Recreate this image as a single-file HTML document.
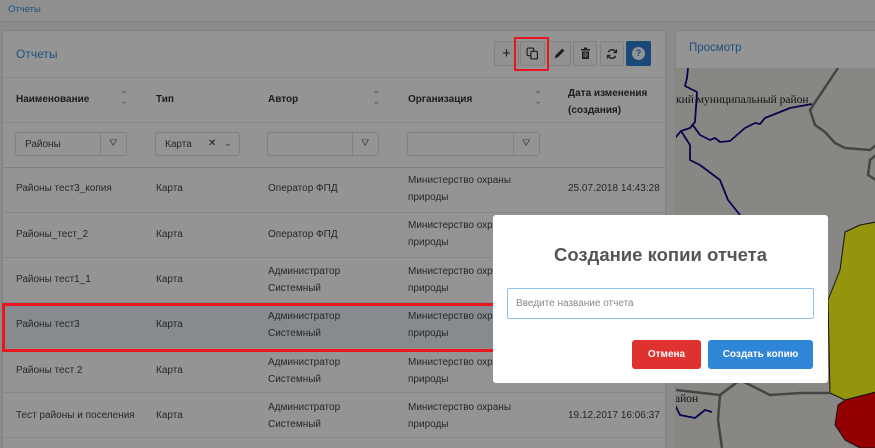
<!DOCTYPE html>
<html style="overflow:hidden;background:#909090"><head><meta charset="utf-8"><style>
*{box-sizing:border-box;margin:0;padding:0}
html,body{width:875px;height:448px;overflow:hidden}
body{position:relative;background:#f0f0f0;font-family:"Liberation Sans",sans-serif;font-size:10px;color:#444}
.a{position:absolute}
.bc{left:0;top:0;width:875px;height:22px;background:#f7f7f7;border-bottom:1px solid #ddd}
.panel{background:#fff;border:1px solid #e2e2e2}
.line{height:1px;background:#e6e6e6;position:absolute;left:0;right:0}
.th{font-weight:bold;color:#333;font-size:10px}
.btn{top:41px;height:25px;border:1px solid #ddd;background:#fafafa;border-radius:2px;display:flex;align-items:center;justify-content:center;color:#333}
.inp{border:1px solid #ddd;border-radius:3px;height:24px;background:#fff}
.td{font-size:10px;color:#444;line-height:17px}
.sort{color:#999;font-size:10px;line-height:6px}
</style></head><body>
<div class="a bc"></div>
<div class="a" style="left:8px;top:4px;color:#3a8ad6;font-size:9.5px">Отчеты</div>

<div class="a panel" style="left:2px;top:30px;width:664px;height:418px;border-bottom:none">
 <div class="a" style="left:13px;top:16px;color:#3a8ad6;font-size:12px">Отчеты</div>
 <div class="line" style="top:46px"></div>
 <div class="line" style="top:91px"></div>
 <div class="line" style="top:136px;background:#ddd"></div>
 <div class="line" style="top:181px"></div>
 <div class="line" style="top:226px"></div>
 <div class="line" style="top:271px"></div>
 <div class="line" style="top:316px"></div>
 <div class="line" style="top:361px"></div>
 <div class="line" style="top:406px"></div>
</div>
<div class="a" style="left:3px;top:302px;width:662px;height:45px;background:#e8f0f8"></div>

<div class="a btn" style="left:494px;width:25px;font-size:15px">+</div>
<div class="a btn" style="left:520px;width:25px"><svg width="13" height="13" viewBox="0 0 12 12" fill="none" stroke="#333" stroke-width="1.1"><rect x="1" y="1" width="6" height="7" rx="1"/><rect x="4.5" y="4" width="6" height="7" rx="1" fill="#fafafa"/></svg></div>
<div class="a btn" style="left:547px;width:24px"><svg width="13" height="13" viewBox="0 0 12 12"><path d="M1.5 10.5l1-3 6-6 2 2-6 6z" fill="#333"/></svg></div>
<div class="a btn" style="left:573px;width:24px"><svg width="11" height="13" viewBox="0 0 11 12"><rect x="1" y="1.5" width="9" height="1.5" fill="#333"/><rect x="4" y="0" width="3" height="2" fill="#333"/><path d="M2 4h7v7.5H2z" fill="#333"/><path d="M4 5v5M5.5 5v5M7 5v5" stroke="#fafafa" stroke-width=".7"/></svg></div>
<div class="a btn" style="left:600px;width:24px"><svg width="12" height="12" viewBox="0 0 12 12" fill="none" stroke="#333" stroke-width="1.4"><path d="M10 4.5A4.2 4.2 0 0 0 2.3 4.2M2 7.5a4.2 4.2 0 0 0 7.7.3"/><path d="M10.5 1.5v3h-3M1.5 10.5v-3h3" stroke-width="1.2"/></svg></div>
<div class="a btn" style="left:626px;width:25px;background:#2b7fd0;border-color:#2b7fd0"><div style="width:13px;height:13px;border-radius:50%;background:#fff;color:#2b7fd0;font-weight:bold;font-size:9px;text-align:center;line-height:13px">?</div></div>

<div class="a th" style="left:16px;top:94px">Наименование</div><div class="a sort" style="left:120px;top:93px">⌃<br>⌄</div>
<div class="a th" style="left:156px;top:94px">Тип</div>
<div class="a th" style="left:268px;top:94px">Автор</div><div class="a sort" style="left:372px;top:93px">⌃<br>⌄</div>
<div class="a th" style="left:408px;top:94px">Организация</div><div class="a sort" style="left:534px;top:93px">⌃<br>⌄</div>
<div class="a th" style="left:568px;top:85px;line-height:17px">Дата изменения<br>(создания)</div>

<div class="a inp" style="left:15px;top:132px;width:112px"><span class="a" style="left:9px;top:6px;font-size:10px">Районы</span><div class="a" style="left:84px;top:0;width:1px;height:22px;background:#ddd"></div><span class="a" style="left:93px;top:5px;color:#777;font-size:10px">⛛</span></div>
<div class="a inp" style="left:155px;top:132px;width:85px"><span class="a" style="left:9px;top:6px;font-size:10px">Карта</span><span class="a" style="left:52px;top:5px;font-size:10px;color:#333">✕</span><span class="a" style="left:68px;top:5px;font-size:9px;color:#555">⌄</span></div>
<div class="a inp" style="left:267px;top:132px;width:112px"><div class="a" style="left:84px;top:0;width:1px;height:22px;background:#ddd"></div><span class="a" style="left:93px;top:5px;color:#777;font-size:10px">⛛</span></div>
<div class="a inp" style="left:407px;top:132px;width:133px"><div class="a" style="left:105px;top:0;width:1px;height:22px;background:#ddd"></div><span class="a" style="left:114px;top:5px;color:#777;font-size:10px">⛛</span></div>

<div class="a td" style="left:16px;top:180px">Районы тест3_копия</div><div class="a td" style="left:156px;top:180px">Карта</div><div class="a td" style="left:268px;top:180px">Оператор ФПД</div><div class="a td" style="left:408px;top:172px">Министерство охраны<br>природы</div><div class="a td" style="left:568px;top:180px">25.07.2018 14:43:28</div>
<div class="a td" style="left:16px;top:226px">Районы_тест_2</div><div class="a td" style="left:156px;top:226px">Карта</div><div class="a td" style="left:268px;top:226px">Оператор ФПД</div><div class="a td" style="left:408px;top:217px">Министерство охраны<br>природы</div>
<div class="a td" style="left:16px;top:271px">Районы тест1_1</div><div class="a td" style="left:156px;top:271px">Карта</div><div class="a td" style="left:268px;top:263px">Администратор<br>Системный</div><div class="a td" style="left:408px;top:263px">Министерство охраны<br>природы</div>
<div class="a td" style="left:16px;top:316px">Районы тест3</div><div class="a td" style="left:156px;top:316px">Карта</div><div class="a td" style="left:268px;top:308px">Администратор<br>Системный</div><div class="a td" style="left:408px;top:308px">Министерство охраны<br>природы</div>
<div class="a td" style="left:16px;top:362px">Районы тест 2</div><div class="a td" style="left:156px;top:362px">Карта</div><div class="a td" style="left:268px;top:354px">Администратор<br>Системный</div><div class="a td" style="left:408px;top:354px">Министерство охраны<br>природы</div>
<div class="a td" style="left:16px;top:407px">Тест районы и поселения</div><div class="a td" style="left:156px;top:407px">Карта</div><div class="a td" style="left:268px;top:399px">Администратор<br>Системный</div><div class="a td" style="left:408px;top:399px">Министерство охраны<br>природы</div><div class="a td" style="left:568px;top:407px">19.12.2017 16:06:37</div>

<div class="a panel" style="left:675px;top:30px;width:202px;height:418px;overflow:hidden;border-bottom:none">
 <div class="a" style="left:13px;top:11px;color:#3a8ad6;font-size:11.5px">Просмотр</div>
 <div class="a" style="left:0;top:37px;width:202px;height:390px;background:#ece9e4"></div>
</div>
<svg class="a" style="left:0;top:0" width="875" height="448" viewBox="0 0 875 448">
 <defs><clipPath id="c"><rect x="676" y="68" width="199" height="380"/></clipPath></defs>
 <g clip-path="url(#c)" fill="none" stroke-linejoin="round">
  <polygon points="845,232 860,225 876,222 876,392 845,400 830,393 828,300 840,270" fill="#ffff18" stroke="#222" stroke-width="1"/>
  <polygon points="845,400 876,392 876,448 860,448 845,440 835,425 838,405" fill="#ff0000" stroke="#222" stroke-width="1"/>
  <path d="M838,68 810,110 815,125 825,132 835,143 845,148 870,150 876,145M876,155 870,160 868,175 876,180M676,390 720,395 740,380 770,395 800,393 830,393M720,395 718,420 722,448" stroke="#777" stroke-width="2.5"/>
  <path d="M688,68 687,78 685,86 697,92 695,122 690,128 681,131 675,138M692,124 700,135 710,140 715,138 720,142 730,141 745,128 755,123 760,124 765,118 790,108 812,104M681,131 690,145 690,160 700,165 720,180 728,200 740,215M675,405 680,415 695,418 705,410 712,412" stroke="#0a0a8a" stroke-width="1.8"/>
  <text x="676" y="103" font-family="Liberation Serif,serif" font-size="11.5" fill="#222" stroke="none">кий муниципальный район</text>
  <text x="675" y="402" font-family="Liberation Serif,serif" font-size="11.5" fill="#222" stroke="none">айон</text>
 </g>
</svg>

<div class="a" style="left:0;top:0;width:875px;height:448px;background:rgba(0,0,0,0.42)"></div>

<div class="a" style="left:514px;top:37px;width:35px;height:34px;border:2px solid #e8171f"></div>
<div class="a" style="left:2px;top:303px;width:492px;height:49px;border:3px solid #e8171f;border-right:none"></div>

<div class="a" style="left:493px;top:215px;width:335px;height:168px;background:#fff;border-radius:3px">
 <div class="a" style="left:0;width:335px;top:29px;text-align:center;font-size:18.5px;font-weight:bold;color:#555">Создание копии отчета</div>
 <div class="a" style="left:14px;top:73px;width:307px;height:31px;border:1px solid #8dc2f0;border-radius:2px"><span class="a" style="left:8px;top:9px;font-size:10px;color:#888">Введите название отчета</span></div>
 <div class="a" style="left:139px;top:125px;width:69px;height:29px;background:#e03131;border-radius:3px;color:#fff;font-weight:bold;font-size:10px;text-align:center;line-height:29px">Отмена</div>
 <div class="a" style="left:215px;top:125px;width:105px;height:29px;background:#2f86d6;border-radius:3px;color:#fff;font-weight:bold;font-size:10px;text-align:center;line-height:29px">Создать копию</div>
</div>
</body></html>
